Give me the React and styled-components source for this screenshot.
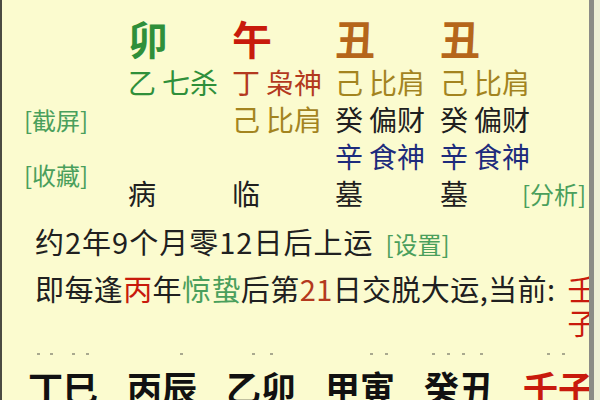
import React from "react";
import styled, { createGlobalStyle } from "styled-components";

const GlobalStyle = createGlobalStyle`
  html, body {
    margin: 0;
    padding: 0;
    background: #fbfbcf;
  }
  body {
    font-family: "Noto Sans CJK SC", "Noto Sans", sans-serif;
  }
`;

const colors = {
  green: "#2f8f3a",
  lightGreen: "#4a9f5c",
  red: "#c81a0c",
  brick: "#b3391e",
  earth: "#b5661b",
  olive: "#a3841f",
  ink: "#202020",
  navy: "#1d2b7c",
};

const pillars = [
  {
    branch: "卯",
    color: colors.green,
    hidden: [{ stem: "乙", god: "七杀", color: colors.green }],
    stage: "病",
  },
  {
    branch: "午",
    color: colors.red,
    hidden: [
      { stem: "丁", god: "枭神", color: colors.brick },
      { stem: "己", god: "比肩", color: colors.olive },
    ],
    stage: "临",
  },
  {
    branch: "丑",
    color: colors.earth,
    hidden: [
      { stem: "己", god: "比肩", color: colors.olive },
      { stem: "癸", god: "偏财", color: colors.ink },
      { stem: "辛", god: "食神", color: colors.navy },
    ],
    stage: "墓",
  },
  {
    branch: "丑",
    color: colors.earth,
    hidden: [
      { stem: "己", god: "比肩", color: colors.olive },
      { stem: "癸", god: "偏财", color: colors.ink },
      { stem: "辛", god: "食神", color: colors.navy },
    ],
    stage: "墓",
  },
];

const luck = [
  { text: "丁巳" },
  { text: "丙辰" },
  { text: "乙卯" },
  { text: "甲寅" },
  { text: "癸丑" },
  { text: "壬子", current: true },
];

const App = () => {
  return (
    <>
      <GlobalStyle />
      <Screen>
        <Content>
          <Chart>
            <Label $col={1} $row="3">[截屏]</Label>
            <Label $col={1} $row="4 / span 2">[收藏]</Label>
            {pillars.map((p, i) => (
              <React.Fragment key={i}>
                <Branch $col={i + 2} $color={p.color}>
                  {p.branch}
                </Branch>
                {p.hidden.map((h, j) => (
                  <Cell key={j} $col={i + 2} $row={j + 2} $color={h.color}>
                    {h.stem}
                    <God>{h.god}</God>
                  </Cell>
                ))}
                <Cell $col={i + 2} $row={5} $color={colors.ink}>
                  {p.stage}
                </Cell>
              </React.Fragment>
            ))}
            <Label $col={6} $row="5">[分析]</Label>
          </Chart>

          <Line>
            约2年9个月零12日后上运
            <InlineLabel>[设置]</InlineLabel>
          </Line>

          <SwitchLine>
            <span>
              即每逢<Mark $color={colors.red}>丙</Mark>年
              <Mark $color={colors.lightGreen}>惊蛰</Mark>后第
              <Mark $color={colors.brick}>21</Mark>日交脱大运,当前:
            </span>
            <Current>
              <span>壬</span>
              <span>子</span>
            </Current>
          </SwitchLine>

          <Ticks>
            {[35, 48, 70, 84, 178, 250, 268, 368, 383, 430, 445, 460, 478, 545, 560].map(
              (x) => (
                <Tick key={x} style={{ left: x }} />
              )
            )}
          </Ticks>

          <LuckRow>
            {luck.map((l) => (
              <LuckItem key={l.text} $current={l.current}>
                {l.text}
              </LuckItem>
            ))}
          </LuckRow>
        </Content>
        <ScrollTrack />
        <Edge />
      </Screen>
    </>
  );
};

const Screen = styled.div`
  display: flex;
  width: 600px;
  height: 400px;
  overflow: hidden;
  background: #fbfbcf;
  border-left: 2px solid #4b4b42;
  box-sizing: border-box;
`;

const Content = styled.div`
  flex: 1;
  min-width: 0;
  overflow: hidden;
  display: flex;
  flex-direction: column;
`;

const Chart = styled.div`
  display: grid;
  grid-template-columns: 126px 104px 103px 105px 82px 1fr;
  grid-template-rows: 46px repeat(4, 37px);
  padding-top: 18px;
`;

const Branch = styled.div`
  grid-column: ${(p) => p.$col};
  grid-row: 1;
  align-self: start;
  font-size: 40px;
  line-height: 40px;
  font-weight: 700;
  color: ${(p) => p.$color};
`;

const Cell = styled.div`
  grid-column: ${(p) => p.$col};
  grid-row: ${(p) => p.$row};
  font-size: 28px;
  line-height: 37px;
  white-space: nowrap;
  color: ${(p) => p.$color};
`;

const God = styled.span`
  margin-left: 6px;
`;

const Label = styled.div`
  grid-column: ${(p) => p.$col};
  grid-row: ${(p) => p.$row};
  align-self: center;
  padding-left: ${(p) => (p.$col === 1 ? "22px" : "0")};
  font-size: 24px;
  line-height: 30px;
  white-space: nowrap;
  color: ${colors.lightGreen};
`;

const Line = styled.div`
  margin-top: 7px;
  padding-left: 33px;
  font-size: 29px;
  line-height: 44px;
  letter-spacing: 1px;
  white-space: nowrap;
  color: ${colors.ink};
`;

const InlineLabel = styled.span`
  margin-left: 12px;
  font-size: 24px;
  letter-spacing: 0;
  color: ${colors.lightGreen};
`;

const SwitchLine = styled.div`
  display: flex;
  align-items: flex-start;
  padding-left: 33px;
  font-size: 29px;
  line-height: 44px;
  letter-spacing: 0.4px;
  white-space: nowrap;
  color: ${colors.ink};
`;

const Mark = styled.span`
  color: ${(p) => p.$color};
`;

const Current = styled.div`
  display: flex;
  flex-direction: column;
  margin-left: 12px;
  padding-top: 5px;
  line-height: 34px;
  color: ${colors.red};
`;

const Ticks = styled.div`
  position: relative;
  height: 30px;
  flex-shrink: 0;
`;

const Tick = styled.span`
  position: absolute;
  top: 14px;
  width: 3px;
  height: 2px;
  background: #a9a98f;
`;

const LuckRow = styled.div`
  display: flex;
  gap: 29px;
  padding-left: 26px;
  white-space: nowrap;
`;

const LuckItem = styled.div`
  font-size: 35px;
  line-height: 36px;
  font-weight: 700;
  color: ${(p) => (p.$current ? colors.red : "#111")};
`;

const ScrollTrack = styled.div`
  width: 5px;
  flex-shrink: 0;
  background: #8b8b86;
`;

const Edge = styled.div`
  width: 6px;
  flex-shrink: 0;
  background: #eeefd6;
`;

export default App;
